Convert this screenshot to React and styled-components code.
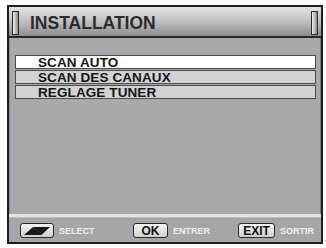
import React from 'react';
import styled, { createGlobalStyle } from 'styled-components';

const GlobalStyle = createGlobalStyle`
  body {
    margin: 0;
    background: #ffffff;
    font-family: 'Liberation Sans', Arial, sans-serif;
  }
`;

const items = [
  { label: 'SCAN AUTO', active: true },
  { label: 'SCAN DES CANAUX', active: false },
  { label: 'REGLAGE TUNER', active: false },
];

const hints = [
  { key: 'arrows', text: 'SELECT', width: 113, btn: 34 },
  { key: 'OK', text: 'ENTRER', width: 105, btn: 35 },
  { key: 'EXIT', text: 'SORTIR', width: 80, btn: 37 },
];

const ArrowsIcon = () => (
  <svg width='26' height='8' viewBox='0 0 26 8'>
    <polygon points='0,8 9,0 18,8' fill='#1a1a1a' />
    <polygon points='9,0 26,0 17.5,8' fill='#1a1a1a' />
  </svg>
);

const App = () => {
  return (
    <>
      <GlobalStyle />
      <Frame>
        {/* Title */}
        <TitleBar>
          <Slot />
          <Title>INSTALLATION</Title>
          <Slot />
        </TitleBar>

        {/* Menu */}
        <Body>
          {items.map((item) => (
            <Row key={item.label} active={item.active}>
              {item.label}
            </Row>
          ))}
        </Body>

        {/* Help bar */}
        <Footer>
          {hints.map((h) => (
            <Hint key={h.text} width={h.width}>
              <Key width={h.btn}>
                {h.key === 'arrows' ? <ArrowsIcon /> : h.key}
              </Key>
              <HintText>{h.text}</HintText>
            </Hint>
          ))}
        </Footer>
      </Frame>
    </>
  );
};

export default App;

const Frame = styled.div`
  box-sizing: border-box;
  margin: 5px 0 0 7px;
  width: 316px;
  height: 239px;
  border: 2px solid #1e1e1e;
  display: flex;
  flex-direction: column;
  background: #a9a9ad;
`;

const TitleBar = styled.div`
  height: 29px;
  flex-shrink: 0;
  border-bottom: 2px solid #262626;
  background: linear-gradient(to bottom, #e2e2e2 0%, #c4c4c6 45%, #8c8c90 100%);
  display: flex;
  align-items: center;
  padding: 0 3px;
`;

const Slot = styled.div`
  box-sizing: border-box;
  width: 7px;
  height: 24px;
  margin-top: 3px;
  border: 1px solid #2a2a2a;
  background: linear-gradient(to right, #f0f0f0, #8a8a8a);
`;

const Title = styled.h1`
  flex: 1;
  margin: 0 0 0 11px;
  font-size: 17.5px;
  font-weight: 700;
  color: #2c2c2c;
  line-height: 1;
  padding-top: 4px;
`;

const Body = styled.div`
  flex: 1;
  padding: 17px 4px 0 5px;
  display: flex;
  flex-direction: column;
  gap: 1px;
  border-left: 1px solid #8a8a8e;
  border-right: 1px solid #7a7a7e;
`;

const Row = styled.div`
  box-sizing: border-box;
  height: 14px;
  border: 1px solid #4a4a4a;
  background: ${(p) => (p.active ? '#ffffff' : '#d3d3d5')};
  padding: 1px 0 0 22px;
  font-size: 13.5px;
  font-weight: 700;
  color: #161616;
  line-height: 12px;
  display: flex;
  align-items: center;
  letter-spacing: 0.1px;
`;

const Footer = styled.div`
  height: 23px;
  flex-shrink: 0;
  border-top: 3px solid #e4e4e6;
  box-shadow: inset 0 1px 0 #bcbcbe;
  background: #a6a6aa;
  display: flex;
  align-items: center;
  padding: 2px 0 0 11px;
`;

const Hint = styled.div`
  width: ${(p) => p.width}px;
  display: flex;
  align-items: center;
  gap: 5px;
`;

const Key = styled.div`
  box-sizing: border-box;
  width: ${(p) => p.width}px;
  height: 15px;
  border: 1px solid #2a2a2a;
  border-radius: 3px;
  background: linear-gradient(to bottom, #f4f4f4, #cfcfd1);
  display: flex;
  align-items: center;
  justify-content: center;
  font-size: 12px;
  font-weight: 700;
  color: #111;
  line-height: 1;
`;

const HintText = styled.span`
  font-size: 9px;
  font-weight: 700;
  color: #f0f0f0;
`;
